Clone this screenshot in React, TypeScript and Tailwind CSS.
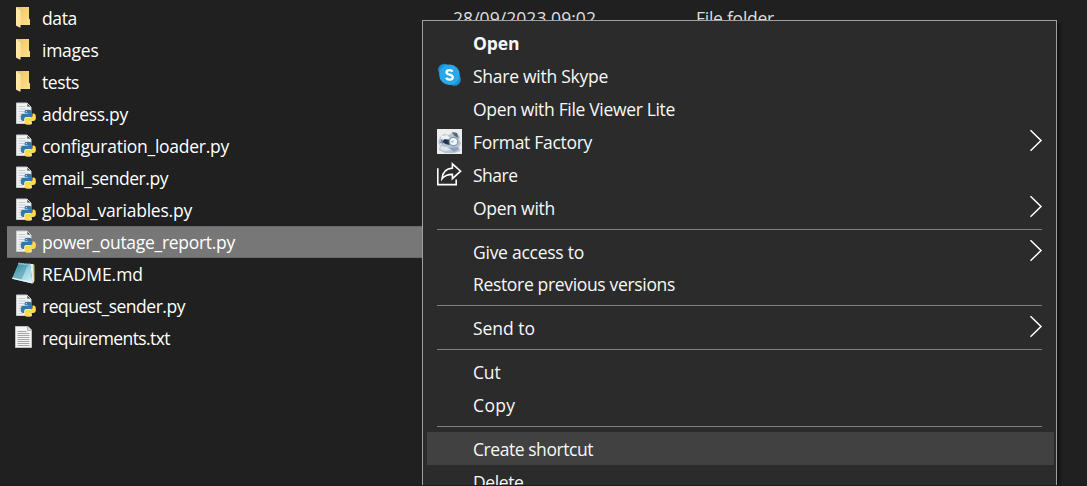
import { useLayoutEffect, useRef, useState } from "react";
import type { ReactNode } from "react";

/** Text label that spreads its letters evenly over the given advance width. */
function Label({ text, width, className = "" }: { text: string; width: number; className?: string }) {
  const ref = useRef<HTMLSpanElement>(null);
  const [spacing, setSpacing] = useState(0);
  useLayoutEffect(() => {
    if (!ref.current) return;
    const natural = ref.current.getBoundingClientRect().width - spacing * text.length;
    setSpacing((width - natural) / text.length);
  }, [text, width]);
  return (
    <span ref={ref} className={`inline-block whitespace-pre ${className}`} style={{ letterSpacing: spacing }}>
      {text}
    </span>
  );
}

function FolderIcon() {
  return (
    <svg width="30" height="32" viewBox="0 0 30 32">
      <defs>
        <linearGradient id="folderBack" x1="0" x2="1" y1="0" y2="1">
          <stop offset="0" stopColor="#efc566" />
          <stop offset="1" stopColor="#ffe08a" />
        </linearGradient>
      </defs>
      <path d="M9 5h13v11.5l1 1V23H9z" fill="url(#folderBack)" />
      <path d="M9 5l4.5 3.4v17.3L9 23.4z" fill="#ffe9a6" />
      <path d="M13.5 8.4v12.4l-1 1.2v3.8L9 23.4" fill="#fbe19a" fillOpacity=".5" />
    </svg>
  );
}

function PythonFileIcon() {
  return (
    <svg width="30" height="32" viewBox="0 0 30 32">
      <path d="M9.5 5h10.500l4 4v16.500h-14.500z" fill="#f3f3f3" stroke="#c9c9c9" />
      <path d="M20 5l4 4h-4z" fill="#555" stroke="#e8e8e8" strokeWidth=".7" />
      <path d="M11.5 8.500h7M11.5 11h8M11.5 13.500h8M11.5 16h5M11.5 18.500h4M11.5 21h4M11.500 23.500h4" stroke="#c8cbd0" strokeWidth="1" />
      <g transform="translate(13.800 11.800) scale(.625)">
        <path
          fill="#3776ab"
          d="M14.25.18l.9.2.73.26.59.3.45.32.34.34.25.34.16.33.1.3.04.26.02.2-.01.13V8.5l-.05.63-.13.55-.21.46-.26.38-.3.31-.33.25-.35.19-.35.14-.33.1-.3.07-.26.04-.21.02H8.77l-.69.05-.59.14-.5.22-.41.27-.33.32-.27.35-.2.36-.15.37-.1.35-.07.32-.04.27-.02.21v3.06H3.17l-.21-.03-.28-.07-.32-.12-.35-.18-.36-.26-.36-.36-.35-.46-.32-.59-.28-.73-.21-.88-.14-1.05-.05-1.23.06-1.22.16-1.04.24-.87.32-.71.36-.57.4-.44.42-.33.42-.24.4-.16.36-.1.32-.05.24-.01h.16l.06.01h8.16v-.83H6.18l-.01-2.75-.02-.37.05-.34.11-.31.17-.28.25-.26.31-.23.38-.2.44-.18.51-.15.58-.12.64-.1.71-.06.77-.04.84-.02 1.27.05z"
        />
        <path
          fill="#ffd94c"
          d="M21.1 6.11l.28.06.32.12.35.18.36.27.36.35.35.47.32.59.28.73.21.88.14 1.04.05 1.23-.06 1.23-.16 1.04-.24.86-.32.71-.36.57-.4.45-.42.33-.42.24-.4.16-.36.09-.32.05-.24.02-.16-.01h-8.22v.82h5.84l.01 2.76.02.36-.05.34-.11.31-.17.29-.25.25-.31.24-.38.2-.44.17-.51.15-.58.13-.64.09-.71.07-.77.04-.84.01-1.27-.04-1.07-.14-.9-.2-.73-.25-.59-.3-.45-.33-.34-.34-.25-.34-.16-.33-.1-.3-.04-.25-.02-.2.01-.13v-5.34l.05-.64.13-.54.21-.46.26-.38.3-.32.33-.24.35-.2.35-.14.33-.1.3-.06.26-.04.21-.02.13-.01h5.84l.69-.05.59-.14.5-.21.41-.28.33-.32.27-.35.2-.36.15-.36.1-.35.07-.32.04-.28.02-.21V6.07h2.09l.14.01z"
        />
        <circle cx="8.8" cy="3" r="1" fill="#dce9f5" />
        <circle cx="15.200" cy="21" r="1" fill="#fff8dc" />
      </g>
    </svg>
  );
}

function NotebookIcon() {
  return (
    <svg width="30" height="32" viewBox="0 0 30 32">
      <defs>
        <linearGradient id="notebook" x1="0" x2=".7" y1="0" y2="1">
          <stop offset="0" stopColor="#2e8ea3" />
          <stop offset=".5" stopColor="#8fd0dc" />
          <stop offset="1" stopColor="#c6ecf2" />
        </linearGradient>
      </defs>
      <path d="M25 6l3 1v15.500l-2.500 3z" fill="#8a6a34" />
      <path d="M23 6h3.500l.5 18-1.500 1.500z" fill="#e4eef0" />
      <path d="M11.500 5.500L23.500 6.500l2 19L5 20.800z" fill="url(#notebook)" />
      <path d="M11.500 7L5 20.800l9 1.700L21 7z" fill="#1f7187" fillOpacity=".35" />
      <path d="M5 20.800l20.500 4.700-.2-1.500L5.600 19.500z" fill="#dff5f8" />
      <path d="M11.500 5.300l12.500 1" stroke="#dfe9ea" strokeWidth="1.300" strokeDasharray="1.200 .8" />
    </svg>
  );
}

function TextFileIcon() {
  return (
    <svg width="30" height="32" viewBox="0 0 30 32">
      <path d="M8.500 4.500h12.500l3.500 3.500v17.500h-16z" fill="#f5f5f5" stroke="#c0c0c0" />
      <path d="M20.500 4.500v4h4" fill="#ddd" stroke="#a5a5a5" strokeWidth=".8" />
      <path d="M10.500 9.500h9M10.500 11.500h12M10.500 13.500h12M10.500 15.500h12M10.500 17.500h12M10.500 19.500h12M10.500 21.500h12M10.500 23.500h12" stroke="#9b9b9b" strokeWidth=".9" />
    </svg>
  );
}

function SkypeIcon() {
  return (
    <svg width="26" height="26" viewBox="0 0 26 26">
      <circle cx="7.500" cy="8" r="6.300" fill="#1b8fd6" />
      <circle cx="17.500" cy="17.500" r="6.300" fill="#1b8fd6" />
      <circle cx="12.500" cy="12.700" r="10.300" fill="#28a8ea" />
      <path d="M15.600 9.600c-.6-1-1.600-1.500-3-1.500-1.900 0-3.100.9-3.100 2.200 0 3.200 6.300 1.500 6.300 4.900 0 1.500-1.400 2.400-3.300 2.400-1.600 0-2.800-.6-3.400-1.700" fill="none" stroke="#fff" strokeWidth="2.300" />
    </svg>
  );
}

function FactoryIcon() {
  return (
    <svg width="26" height="26" viewBox="0 0 26 26" className="mt-px">
      <path d="M0 0h25v25H0z" fill="#ededed" />
      <path d="M3 8l4-3 5 1 4-3 4 1 3 4-1 3 2 3-2 4 1 4-6 2H8l-6-3 1-4-2-4z" fill="#b4c2d2" />
      <path d="M4 7l6-1 3 3-6 3-4 5z" fill="#e9f0f6" />
      <path d="M15 3l5 1 1.500 5-4-2z" fill="#5b6675" />
      <path d="M4 10l3 1-1 4-3-1z" fill="#7d91ab" />
      <path d="M7.500 10l5 1v5l-4-1-3-2z" fill="#223651" />
      <circle cx="16.500" cy="12.500" r="4.800" fill="#8a9baf" />
      <circle cx="16.500" cy="12.500" r="3.600" fill="#f7f9fb" />
      <path d="M13 12.500l4-1.500-1 3z" fill="#aebdce" />
      <path d="M4 17l6 1 4 3-6 1-5-2z" fill="#dbe6ef" />
      <path d="M12 19l8-1 2 2-5 3z" fill="#8fa1b8" />
    </svg>
  );
}

function ShareIcon() {
  return (
    <svg width="26" height="26" viewBox="0 0 26 26" fill="none" stroke="#fff" strokeWidth="1.600">
      <path d="M.8 7.200v16.400h18.400v-5" />
      <path d="M15.400 2.800l8.200 7.400-8.200 7.400v-4.200c-5 0-8 1.200-10.400 4.400.5-6 4-10.300 10.400-10.700z" />
    </svg>
  );
}

function Chevron() {
  return (
    <svg width="14" height="25" viewBox="0 0 14 25" fill="none" stroke="#fff" strokeWidth="1.500" className="mb-1">
      <path d="M1.500 2.200L12 12.500 1.500 22.800" />
    </svg>
  );
}

const icons = {
  folder: <FolderIcon />,
  python: <PythonFileIcon />,
  notebook: <NotebookIcon />,
  text: <TextFileIcon />,
};

const files: { name: string; width: number; icon: keyof typeof icons; selected?: boolean; date?: string; kind?: string }[] = [
  { name: "data", width: 35, icon: "folder", date: "28/09/2023 09:02", kind: "File folder" },
  { name: "images", width: 56.5, icon: "folder" },
  { name: "tests", width: 37, icon: "folder" },
  { name: "address.py", width: 86, icon: "python" },
  { name: "configuration_loader.py", width: 187, icon: "python" },
  { name: "email_sender.py", width: 126, icon: "python" },
  { name: "global_variables.py", width: 150, icon: "python" },
  { name: "power_outage_report.py", width: 193, icon: "python", selected: true },
  { name: "README.md", width: 101, icon: "notebook" },
  { name: "request_sender.py", width: 143, icon: "python" },
  { name: "requirements.txt", width: 128, icon: "text" },
];

function FileRow({ name, width, icon, selected, date, kind }: (typeof files)[number]) {
  return (
    <div className={`flex h-8 items-center ${selected ? "border-y border-[#676767] bg-[#777777]" : ""}`}>
      <div className="flex w-[446px] items-center">
        <span className="flex w-[35px] shrink-0">{icons[icon]}</span>
        <Label text={name} width={width} />
      </div>
      {date && (
        <div className="w-[243px] text-[#dedede]">
          <Label text={date} width={143} />
        </div>
      )}
      {kind && (
        <div className="text-[#dedede]">
          <Label text={kind} width={78} />
        </div>
      )}
    </div>
  );
}

function MenuItem({ text, width, icon, submenu, bold, active, low }: {
  text: string;
  width: number;
  icon?: ReactNode;
  submenu?: boolean;
  bold?: boolean;
  active?: boolean;
  low?: boolean;
}) {
  return (
    <div className={`mr-0.5 ml-1 flex h-[33px] shrink-0 items-center pr-[11px] pl-2.5 ${active ? "bg-[#414141]" : ""}`}>
      <span className="flex h-[29px] w-9 shrink-0 items-start">{icon}</span>
      <div className={`grow ${bold ? "font-bold" : ""} ${low ? "pt-px" : "pb-px"}`}>
        <Label text={text} width={width} className="align-top" />
      </div>
      {submenu && <Chevron />}
    </div>
  );
}

function Separator() {
  return (
    <div className="flex h-[11px] shrink-0 flex-col pt-1 pr-[14px] pl-[14px]">
      <div className="h-px bg-[#808080]" />
    </div>
  );
}

export default function App() {
  return (
    <div className="relative h-[486px] w-[1087px] overflow-hidden bg-[#202020] font-['Open_Sans','Noto_Sans',sans-serif] text-[17.5px] leading-6 text-white">
      <div className="flex w-[1040px] flex-col pt-0.5 pl-[7px]">
        {files.map((file) => (
          <FileRow key={file.name} {...file} />
        ))}
      </div>
      <div className="absolute top-5 left-[422px] flex h-[520px] w-[635px] flex-col border border-[#a0a0a0] bg-[#2b2b2b] pt-1.5 text-[#f8f8f8] shadow-[3px_3px_3px_rgba(0,0,0,0.45)]">
        <MenuItem text="Open" width={46.5} bold />
        <MenuItem text="Share with Skype" width={135} icon={<SkypeIcon />} />
        <MenuItem text="Open with File Viewer Lite" width={202} />
        <MenuItem text="Format Factory" width={119} icon={<FactoryIcon />} submenu />
        <MenuItem text="Share" width={44.5} icon={<ShareIcon />} />
        <MenuItem text="Open with" width={82} submenu />
        <Separator />
        <div className="-mb-px flex shrink-0 flex-col">
          <MenuItem text="Give access to" width={111} submenu />
        </div>
        <MenuItem text="Restore previous versions" width={202} />
        <Separator />
        <MenuItem text="Send to" width={62} submenu />
        <Separator />
        <MenuItem text="Cut" width={27.5} />
        <MenuItem text="Copy" width={42.5} />
        <div className="-mb-px flex shrink-0 flex-col">
          <Separator />
        </div>
        <MenuItem text="Create shortcut" width={120} active low />
        <MenuItem text="Delete" width={50.5} low />
      </div>
      <div className="absolute inset-x-0 bottom-0 h-px bg-[#201a1d]" />
    </div>
  );
}
